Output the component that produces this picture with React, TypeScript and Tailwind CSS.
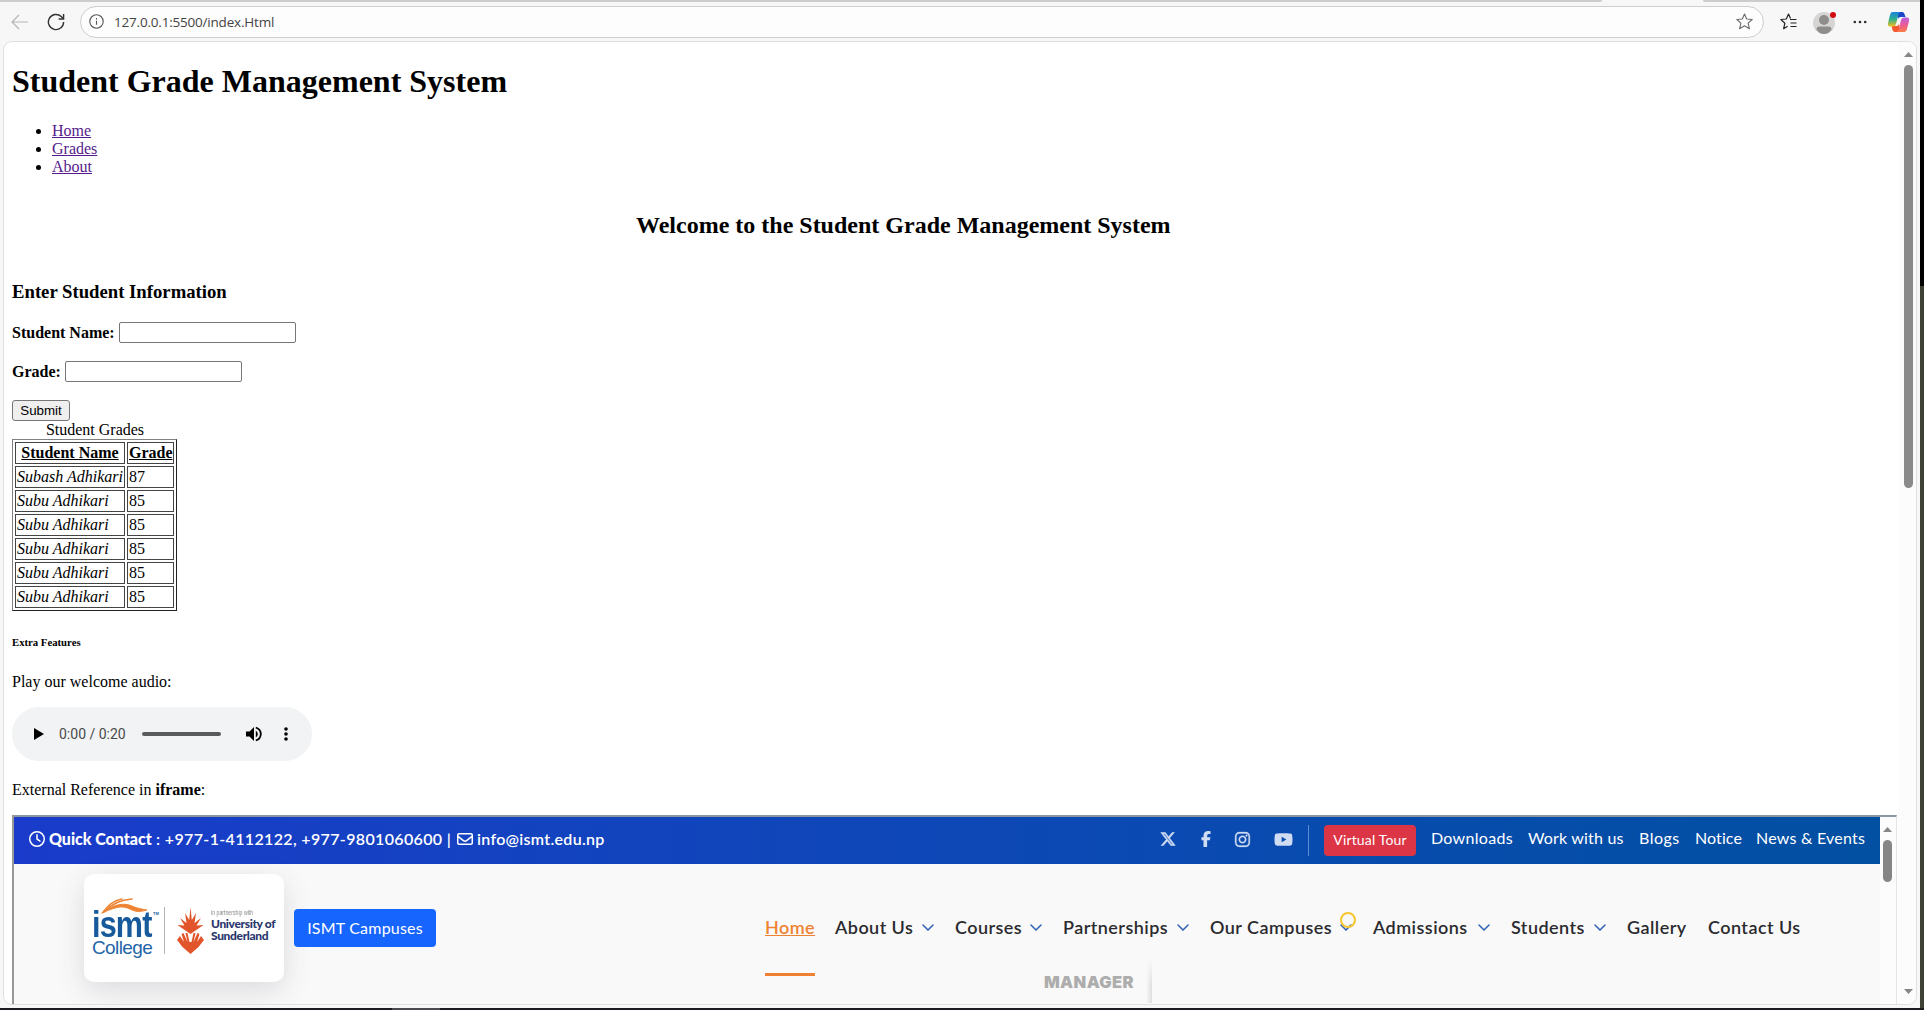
import React from "react";
import { FaXTwitter, FaFacebookF, FaInstagram, FaYoutube, FaRegClock, FaRegEnvelope } from "react-icons/fa6";

const students = [
  ["Subash Adhikari", "87"],
  ["Subu Adhikari", "85"],
  ["Subu Adhikari", "85"],
  ["Subu Adhikari", "85"],
  ["Subu Adhikari", "85"],
  ["Subu Adhikari", "85"],
];

function Chevron() {
  return (
    <svg className="mr-px ml-[8px] h-[7px] w-3 shrink-0" viewBox="0 0 12 7" fill="none" stroke="#2f62b5" strokeWidth="1.5" strokeLinecap="round">
      <path d="M1 1l5 5 5-5" />
    </svg>
  );
}

function ScrollArrow({ down = false }: { down?: boolean }) {
  return (
    <svg className="h-[5px] w-[9px] shrink-0" viewBox="0 0 9 5" fill="#868686">
      <path d={down ? "M0 0h9L4.500 5z" : "M0 5h9L4.500 0z"} />
    </svg>
  );
}

function Toolbar() {
  return (
    <div className="flex h-[39px] w-[1920px] items-center">
      <svg className="ml-[11px] h-[18px] w-[18px]" viewBox="0 0 18 18" fill="none" stroke="#b5b5b5" strokeWidth="1.2">
        <path d="M17 9H1.500M8 2L1 9l7 7" />
      </svg>
      <svg className="ml-[18px] h-[18px] w-[18px]" viewBox="0 0 18 18" fill="none" stroke="#333" strokeWidth="1.4">
        <path d="M16.600 9A7.600 7.600 0 1 1 14.200 3.500L16.500 5.800" />
        <path d="M16.600 1v5h-5" />
      </svg>
      <div className="ml-[15px] flex h-8 w-[1684px] items-center rounded-full border border-[#cdcdcd] bg-[#fdfdfd]">
        <svg className="ml-[8px] h-[15px] w-[15px]" viewBox="0 0 15 15" fill="none" stroke="#555" strokeWidth="1.100">
          <circle cx="7.500" cy="7.500" r="6.700" />
          <path d="M7.500 6.800v4M7.500 4v1.400" />
        </svg>
        <span className="ml-[10px] w-40 font-['Open_Sans','Noto_Sans',sans-serif] text-[13.500px] leading-5 tracking-[-0.200px] text-[#444]">127.0.0.1:5500/index.Html</span>
        <svg className="ml-auto mr-[10px] h-[17px] w-[17px]" viewBox="0 0 17 17" fill="none" stroke="#6b6b6b" strokeWidth="1.100" strokeLinejoin="round">
          <path d="M8.500 1l2.200 5 5.500.5-4.100 3.700 1.300 5.500-4.900-2.900-4.900 2.900 1.300-5.500L.8 6.500l5.500-.5z" />
        </svg>
      </div>
      <svg className="ml-4 h-[17px] w-[17px]" viewBox="0 0 17 17" fill="none" stroke="#222" strokeWidth="1.200" strokeLinejoin="round">
        <path d="M10.500 5.600L8.500 1 6.300 6 .8 6.500l4.100 3.700-1.300 5.500 4-2.400M10 6.500h6.500M10.500 10h6M10.500 13.500h6" />
      </svg>
      <svg className="ml-4 h-6 w-6" viewBox="0 0 24 24">
        <circle cx="11" cy="13" r="11" fill="#d6d5d3" />
        <circle cx="11" cy="10" r="5" fill="#8e8d8b" />
        <path d="M3.500 19.500q0-3 3-3h9q3 0 3 3-3 4.500-7.500 4.500t-7.500-4.500z" fill="#8e8d8b" />
        <circle cx="20" cy="5" r="3" fill="#d40b14" />
      </svg>
      <svg className="ml-[16px] h-1 w-[14px]" viewBox="0 0 14 4" fill="#2a2a2a">
        <circle cx="1.800" cy="2" r="1.300" />
        <circle cx="7" cy="2" r="1.300" />
        <circle cx="12.200" cy="2" r="1.300" />
      </svg>
      <svg className="ml-[20px] h-[22px] w-[23px]" viewBox="0 0 23 22">
        <defs>
          <linearGradient id="coA" x1="0" y1="0" x2="0" y2="1">
            <stop offset="0" stopColor="#1b83df" />
            <stop offset=".5" stopColor="#2fb08d" />
            <stop offset="1" stopColor="#f2c21c" />
          </linearGradient>
          <linearGradient id="coB" x1="0" y1="0" x2="0" y2="1">
            <stop offset="0" stopColor="#b660e4" />
            <stop offset=".5" stopColor="#ee5a96" />
            <stop offset="1" stopColor="#fb7b45" />
          </linearGradient>
        </defs>
        <path d="M10 1h5q2 0 2.500 2l1 3h-5q-2 0-2.500 2z" fill="#1b48c8" />
        <path d="M13 21H8q-2 0-2.500-2l-1-4h5q2 0 2.500-2z" fill="#f4592f" />
        <path d="M5.500 1h8q-1.500.5-2 2L9 13q-.7 2.500-3 2.500H3Q.3 15.500 1 12L3 4q.7-3 2.500-3z" fill="url(#coA)" />
        <path d="M17.500 21h-8q1.500-.5 2-2L14 9q.7-2.500 3-2.500h3q2.700 0 2 3.500l-2 8q-.7 3-2.500 3z" fill="url(#coB)" />
      </svg>
    </div>
  );
}

function StudentTable() {
  return (
    <div className="w-[165px]">
      <div className="h-[18px] pl-px text-center">Student Grades</div>
      <div className="grid grid-cols-[110px_47px] gap-[2px] border border-t-[#808080] border-l-[#808080] border-r-[#222] border-b-[#222] p-[2px]">
        <div className="h-[22px] border border-[#444] text-center leading-5 font-bold underline">Student Name</div>
        <div className="h-[22px] border border-[#444] pl-px leading-5 font-bold whitespace-nowrap underline">Grade</div>
        {students.map(([name, grade], i) => (
          <React.Fragment key={i}>
            <div className="h-[22px] border border-[#444] pl-px leading-5 whitespace-nowrap italic">{name}</div>
            <div className="h-[22px] border border-[#444] pl-px leading-5">{grade}</div>
          </React.Fragment>
        ))}
      </div>
    </div>
  );
}

function AudioPlayer() {
  return (
    <div className="flex h-[54px] w-[300px] items-center rounded-full bg-[#f1f3f4]">
      <svg className="ml-[22px] h-3 w-[10px]" viewBox="0 0 10 12"><path d="M0 0l10 6-10 6z" /></svg>
      <span className="ml-[15px] w-[68px] font-[Roboto,sans-serif] text-[14px] leading-5 whitespace-nowrap text-[#4a4a4a]">0:00 / 0:20</span>
      <div className="ml-[15px] h-1 w-[79px] rounded-full bg-[#5a5a5c]" />
      <svg className="ml-[25px] h-4 w-4" viewBox="0 0 16 16">
        <path d="M0 5.500h3.500L8 1v14l-4.500-4.500H0z" />
        <path d="M9.800 4.500q2 1.500 2 3.500t-2 3.500z" />
        <path d="M9.800 1.500q5 1.800 5 6.500t-5 6.500" fill="none" stroke="#000" strokeWidth="1.800" />
      </svg>
      <svg className="ml-[22px] h-[14px] w-1" viewBox="0 0 4 14"><circle cx="2" cy="2" r="1.800" /><circle cx="2" cy="7" r="1.800" /><circle cx="2" cy="12" r="1.800" /></svg>
    </div>
  );
}

function Logo() {
  return (
    <div className="flex h-[108px] w-[200px] rounded-[10px] bg-white shadow-[0_8px_28px_rgba(60,60,90,0.16)]">
      <div className="relative mt-[22px] ml-2 h-[68px] w-[66px] font-['Liberation_Sans',sans-serif]">
        <svg className="absolute top-[2px] left-[9px] h-[17px] w-[48px]" viewBox="0 0 48 17" preserveAspectRatio="none" fill="none" stroke="#ee8434" strokeLinecap="round">
          <path d="M2 14Q10 3 21 1" strokeWidth="1.300" />
          <path d="M3 14Q14 2 31 1" strokeWidth="1.600" />
          <path d="M1 15C14 5 24 5 31 8s10 3 15 4c-7 2-12 2-17-1C21 7 14 9 1 15z" fill="#ee8434" strokeWidth="1" />
        </svg>
        <div className="absolute top-[15px] left-0 origin-left scale-x-[0.85] text-[36px] leading-[28px] font-bold tracking-[-1px] text-[#175a9c]">ismt</div>
        <div className="absolute top-[15px] left-[61px] text-[4px] leading-[5px] font-bold text-[#175a9c]">TM</div>
        <div className="absolute top-[43px] left-0 text-[19px] leading-[18px] tracking-[-0.600px] text-[#1f66a8]">College</div>
      </div>
      <div className="mt-[33px] ml-[6px] h-[47px] w-px bg-[#b5b5b5]" />
      <svg className="mt-[33px] ml-3 h-[47px] w-[27px]" viewBox="0 0 27 47" fill="#e2552a">
        <path d="M13.500 0l1.300 13L19 6l-1.500 10 6.500-5-4.500 7.500 7-.5-6.500 4.500L13.500 27 7 22.500.5 18l7 .5L3 11l6.500 5L8 6l4.200 7z" />
        <path d="M0 33l3-4 4 6-2.500-8 2-1 4 9-2-9h2l2 9h2l2-9h2l-2 9 4-9 2 1-2.500 8 4-6 3 4-5.500 7-8 7-8-7z" />
      </svg>
      <div className="mt-[34px] ml-[7px] w-[66px] whitespace-nowrap">
        <div className="origin-left scale-x-[0.650] font-['Liberation_Sans',sans-serif] text-[8px] leading-[10px] text-[#888]">in partnership with</div>
        <div className="font-[Lato,sans-serif] text-[12px] leading-[12px] font-black tracking-[-0.350px] text-[#29366d]">University of<br />Sunderland</div>
      </div>
    </div>
  );
}

const nav: [string, string, boolean][] = [
  ["About Us", "w-[79px]", true],
  ["Courses", "w-[67px]", true],
  ["Partnerships", "w-[106px]", true],
  ["Our Campuses", "w-[122px]", true],
  ["Admissions", "w-[97px]", true],
  ["Students", "w-[75px]", true],
  ["Gallery", "w-[61px]", false],
  ["Contact Us", "w-[92px]", false],
];

function CollegeSite() {
  return (
    <div className="flex h-[189px] w-[1885px] border-t-2 border-r border-l-2 border-t-[#8c979f] border-r-[#e4e4e4] border-l-[#999] font-[Lato,sans-serif]">
      <div className="w-[1866px] overflow-hidden bg-[#f9f9f9]">
        <div className="flex h-[47px] items-start bg-linear-to-r from-[#1a3bcb] to-[#0250a2] text-[16px] leading-6 whitespace-nowrap text-white">
          <div className="mt-[10px] ml-[15px] flex w-[580px] items-center font-semibold">
            <FaRegClock className="h-4 w-4" />
            <span className="ml-1 w-[404px] tracking-[0.350px]"><b className="tracking-[-0.020px]">Quick Contact</b> : +977-1-4112122, +977-9801060600 |</span>
            <FaRegEnvelope className="ml-[4px] h-4 w-4" />
            <span className="ml-1 tracking-[0.300px]">info@ismt.edu.np</span>
          </div>
          <div className="mt-[8px] ml-auto flex h-[31px] items-center">
            <div className="-mt-[3px] flex w-[148px] items-center text-[#cfdcf2]">
              <FaXTwitter className="h-4 w-4" stroke="currentColor" strokeWidth="18" />
              <FaFacebookF className="ml-[22px] h-4 w-4" />
              <FaInstagram className="ml-[20px] h-[17px] w-[17px]" stroke="currentColor" strokeWidth="10" />
              <FaYoutube className="ml-[23px] h-[19px] w-[19px]" />
            </div>
            <div className="h-[31px] w-px bg-[#5f8bd0]" />
            <div className="ml-[15px] h-[31px] w-[92px] rounded bg-[#dc3545] text-center text-[14px] leading-[30px] tracking-[0.150px]">Virtual Tour</div>
            <span className="-mt-[5px] ml-[15px] w-[83px] tracking-[0.300px]">Downloads</span>
            <span className="-mt-[5px] ml-[14px] w-[97px] tracking-[0.180px]">Work with us</span>
            <span className="-mt-[5px] ml-[14px] w-[42px] tracking-[0.500px]">Blogs</span>
            <span className="-mt-[5px] ml-[14px] w-[47px] tracking-[0.100px]">Notice</span>
            <span className="-mt-[5px] ml-[14px] w-[124px] tracking-[0.220px]">News &amp; Events</span>
          </div>
        </div>
        <div className="flex h-[140px] items-start pt-[10px] pl-[70px]">
          <Logo />
          <div className="mt-[35px] ml-[10px] h-[38px] w-[142px] rounded bg-[#1765ff] text-center text-[16px] leading-[37px] tracking-[0.200px] text-white">ISMT Campuses</div>
          <div className="ml-[329px]">
            <div className="mt-[39px] flex h-7 items-center text-[18px] leading-7 font-semibold tracking-[0.450px] whitespace-nowrap text-[#2b2b2f]">
              <span className="relative w-[50px] text-[#ef8230] underline">
                Home
                <span className="absolute top-[60px] left-0 h-[3px] w-[50px] bg-[#ef8230]" />
              </span>
              {nav.map(([label, width, menu]) => (
                <div key={label} className="relative ml-5 flex items-center">
                  <span className={width}>{label}</span>
                  {menu && <Chevron />}
                  {label === "Our Campuses" && <span className="absolute -top-px left-[130px] h-4 w-4 rounded-full border-2 border-[#f7c531]" />}
                </div>
              ))}
            </div>
            <div className="flex h-[62px] pl-[279px]">
              <span className="mt-[29px] w-[102px] font-[Inter,sans-serif] text-[16.500px] leading-6 font-black tracking-[0.350px] text-[#adadad]">MANAGER</span>
              <span className="mt-[18px] h-[44px] w-[6px] bg-linear-to-r from-transparent to-[#dedede] mask-t-from-40%" />
            </div>
          </div>
        </div>
      </div>
      <div className="flex w-[16px] flex-col items-center bg-[#fcfcfc] pt-[10px] pr-px">
        <ScrollArrow />
        <div className="mt-2 h-[42px] w-[9px] rounded-full bg-[#868686]" />
      </div>
    </div>
  );
}

export default function App() {
  return (
    <div className="flex h-[1010px] w-[1924px] flex-col overflow-hidden bg-[#1b1b20]">
      <div className="flex h-[1008px]">
        <div className="h-[1008px] w-[1920px] bg-[#f7f7f7]">
          <div className="flex h-[2px] justify-between">
            <div className="w-[1602px] rounded-br bg-[#cccccc]" />
            <div className="w-[217px] rounded-bl bg-[#cccccc]" />
          </div>
          <Toolbar />
          <div className="ml-[3px] flex h-[964px] w-[1914px] overflow-hidden rounded-[9px] border border-[#e0e0e0] bg-white font-['Liberation_Serif',serif] text-[16px] leading-[18px] text-black">
            <div className="h-[962px] w-[1894px] shrink-0 pt-[21px] pl-2">
              <h1 className="text-[32px] leading-[37px] font-bold">Student Grade Management System</h1>
              <ul className="mt-[22px] list-disc pl-10 text-[#551a8b]">
                {["Home", "Grades", "About"].map((t) => (
                  <li key={t} className="marker:text-black"><a className="underline" href="#">{t}</a></li>
                ))}
              </ul>
              <h2 className="mt-[35px] pl-[624px] text-[24px] leading-[28px] font-bold">Welcome to the Student Grade Management System</h2>
              <h3 className="mt-[42px] text-[18.720px] leading-[22px] font-bold">Enter Student Information</h3>
              <div className="mt-[19px] flex h-[21px] items-center font-bold">
                <span className="w-[107px]">Student Name:</span>
                <input className="h-[21px] w-[177px] rounded-[2px] border border-[#767676] bg-white" />
              </div>
              <div className="mt-[18px] flex h-[21px] items-center font-bold">
                <span className="w-[53px]">Grade:</span>
                <input className="h-[21px] w-[177px] rounded-[2px] border border-[#767676] bg-white" />
              </div>
              <button className="mt-[18px] block h-[21px] w-[58px] rounded-[3px] border border-[#767676] bg-[#efefef] font-['Liberation_Sans',sans-serif] text-[13.333px] leading-[19px]">Submit</button>
              <StudentTable />
              <h5 className="mt-[25px] text-[10.720px] leading-[13px] font-bold">Extra Features</h5>
              <p className="mt-[24px]">Play our welcome audio:</p>
              <div className="mt-4"><AudioPlayer /></div>
              <p className="mt-5">External Reference in <b>iframe</b>:</p>
              <div className="mt-4"><CollegeSite /></div>
            </div>
            <div className="flex h-[962px] w-[18px] shrink-0 flex-col items-center bg-[#fcfcfc] pt-[10px] pb-[10px] pl-[3px]">
              <ScrollArrow />
              <div className="mt-2 mb-auto h-[423px] w-[9px] rounded-full bg-[#8a8a8a]" />
              <ScrollArrow down />
            </div>
          </div>
        </div>
        <div className="h-[1008px] w-1 bg-[#3e4136]">
          <div className="h-[286px] bg-black" />
        </div>
      </div>
      <div className="h-[2px] pl-[392px]"><div className="h-[2px] w-12 bg-[#4a4a50]" /></div>
    </div>
  );
}
